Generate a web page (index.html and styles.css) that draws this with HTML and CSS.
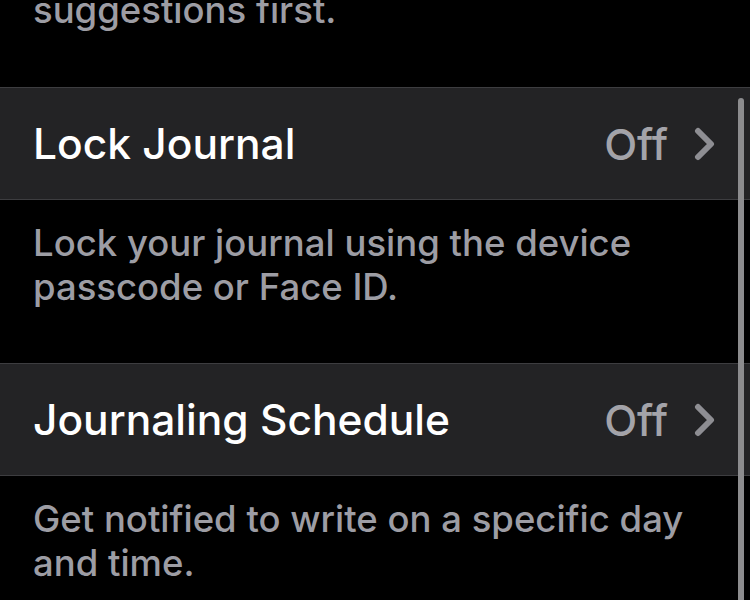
FILE: index.html
```html
<!DOCTYPE html>
<html>
<head>
<meta charset="utf-8">
<link rel="stylesheet" href="styles.css">
</head>
<body>
<div class="screen">
  <p class="note note-top">suggestions first.</p>
  <div class="row">
    <span class="label">Lock Journal</span>
    <span class="value">Off</span>
    <svg class="chev" width="22" height="34" viewBox="0 0 22 34"><path d="M4 4 L17 17 L4 30" fill="none" stroke="#8e8e93" stroke-width="6" stroke-linecap="round" stroke-linejoin="round"/></svg>
  </div>
  <p class="note">Lock your journal using the device passcode or Face ID.</p>
  <div class="row">
    <span class="label">Journaling Schedule</span>
    <span class="value">Off</span>
    <svg class="chev" width="22" height="34" viewBox="0 0 22 34"><path d="M4 4 L17 17 L4 30" fill="none" stroke="#8e8e93" stroke-width="6" stroke-linecap="round" stroke-linejoin="round"/></svg>
  </div>
  <p class="note">Get notified to write on a specific day and time.</p>
  <div class="scrollbar"></div>
</div>
</body>
</html>
```

FILE: styles.css
```css
html, body {
  margin: 0;
  padding: 0;
  background: #000;
}
.screen {
  position: relative;
  width: 750px;
  height: 600px;
  overflow: hidden;
  font-family: Inter, "Liberation Sans", sans-serif;
}
.note {
  margin: 0;
  padding: 21px 40px 54px 33px;
  font-size: 36.5px;
  font-weight: 500;
  line-height: 44px;
  color: #9d9da4;
}
.note-top {
  margin-top: -12px;
  padding-top: 0;
  padding-bottom: 55px;
}
.row {
  display: flex;
  align-items: center;
  height: 111px;
  background: #232325;
  border-top: 1px solid #3d3d40;
  border-bottom: 1px solid #3d3d40;
  padding: 0 34px 0 33px;
}
.label {
  flex: 1;
  font-size: 42.5px;
  color: #fff;
  font-weight: 500;
}
.value {
  font-size: 43px;
  font-weight: 500;
  color: #a3a3a9;
  margin-right: 26px;
}
.chev {
  display: block;
}
.scrollbar {
  position: absolute;
  left: 738px;
  top: 98px;
  width: 6px;
  height: 520px;
  border-radius: 3px;
  background: #8c8c8e;
}
```
